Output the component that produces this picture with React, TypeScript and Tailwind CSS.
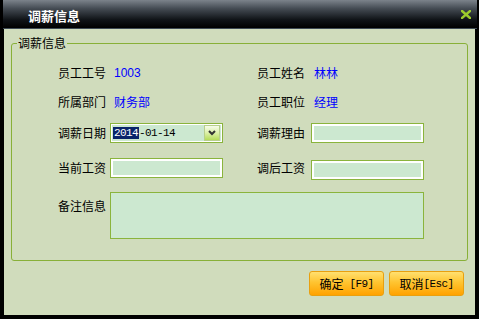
const cjk = "font-['Noto_Sans_CJK_SC',sans-serif]";
const mono = "font-['Liberation_Mono','Noto_Sans_CJK_SC',monospace] tracking-[-0.6px]";

function Label({ children, w }: { children: string; w: string }) {
    return <span className={`${w} text-[12px] leading-[14px] text-black ${cjk}`}>{children}</span>;
}

function Value({ children }: { children: string }) {
    return (
        <span className="ml-[4px] text-[12px] leading-[14px] text-[#0000ff] font-['Liberation_Sans','Noto_Sans_CJK_SC',sans-serif]">
            {children}
        </span>
    );
}

function TextBox({ extra = '' }: { extra?: string }) {
    return (
        <input
            className={`w-[113px] h-[20px] border border-[#8ab43c] bg-[#cce8d0] shadow-[inset_0_0_0_2px_#ffffff] outline-none ${extra}`}
        />
    );
}

export default function App() {
    return (
        <div className="w-[479px] h-[319px] bg-black flex flex-col overflow-hidden">
            {/* 标题栏 */}
            <div className="h-[29px] ml-[3px] mr-[2px] flex items-center justify-between border-b border-[#3e4a54] bg-[linear-gradient(to_bottom,#7c838b_0%,#454c54_30%,#101418_70%,#000000_100%)]">
                <span className={`ml-[25px] mt-[3px] text-[13px] font-bold text-white leading-[14px] ${cjk}`}>调薪信息</span>
                <svg className="mr-[6px] mt-[1px]" width="10" height="9" viewBox="0 0 10 9">
                    <path d="M1 1 L9 8 M9 1 L1 8" stroke="#9ccc2c" strokeWidth="2.4" strokeLinecap="square" />
                </svg>
            </div>

            {/* 内容 */}
            <div className="mx-[4px] h-[286px] bg-[#d0dcbc] flex flex-col">
                <div className="relative mt-[14px] mx-[7px] h-[218px] border border-[#88b038] rounded-[3px] pl-[46px] pt-[19px] flex flex-col">
                    <span className={`absolute left-[5px] top-[-8px] px-[1px] bg-[#d0dcbc] text-[12px] leading-[14px] text-black ${cjk}`}>
                        调薪信息
                    </span>

                    <div className="h-[20px] flex items-center">
                        <div className="w-[199px] flex items-center">
                            <Label w="w-[52px]">员工工号</Label>
                            <Value>1003</Value>
                        </div>
                        <div className="flex items-center">
                            <Label w="w-[54px]">员工姓名</Label>
                            <span className={`ml-[3px] text-[12px] leading-[14px] text-[#0000ff] ${cjk}`}>林林</span>
                        </div>
                    </div>

                    <div className="mt-[9px] h-[20px] flex items-center">
                        <div className="w-[199px] flex items-center">
                            <Label w="w-[52px]">所属部门</Label>
                            <span className={`ml-[4px] text-[12px] leading-[14px] text-[#0000ff] ${cjk}`}>财务部</span>
                        </div>
                        <div className="flex items-center">
                            <Label w="w-[54px]">员工职位</Label>
                            <span className={`ml-[3px] text-[12px] leading-[14px] text-[#0000ff] ${cjk}`}>经理</span>
                        </div>
                    </div>

                    <div className="mt-[11px] h-[20px] flex items-center">
                        <div className="w-[199px] flex items-center">
                            <Label w="w-[52px]">调薪日期</Label>
                            <div className="w-[113px] h-[20px] border border-[#8ab43c] bg-[#cce8d0] shadow-[inset_0_0_0_1px_#ffffff] flex items-center pl-[2px] pr-[2px]">
                                <span className={`text-[11px] leading-[13px] text-black ${mono}`}>
                                    <span className="bg-[#0a246a] text-white px-[1px]">2014</span>-01-14
                                </span>
                                <div className="ml-auto w-[16px] h-[16px] border border-[#b7cf8c] bg-[linear-gradient(to_bottom,#f6fbea_0%,#dcf0a8_50%,#b4dc58_100%)] flex items-center justify-center">
                                    <svg width="8" height="6" viewBox="0 0 8 6">
                                        <path d="M1 1 L4 4 L7 1" stroke="#333333" strokeWidth="2" fill="none" />
                                    </svg>
                                </div>
                            </div>
                        </div>
                        <div className="flex items-center">
                            <Label w="w-[54px]">调薪理由</Label>
                            <TextBox />
                        </div>
                    </div>

                    <div className="mt-[15px] h-[20px] flex items-center">
                        <div className="w-[199px] flex items-center">
                            <Label w="w-[52px]">当前工资</Label>
                            <TextBox />
                        </div>
                        <div className="flex items-center">
                            <Label w="w-[54px]">调后工资</Label>
                            <TextBox extra="mt-[4px]" />
                        </div>
                    </div>

                    <div className="mt-[14px] flex items-start">
                        <div className="w-[52px] pt-[1px]">
                            <Label w="w-[52px]">备注信息</Label>
                        </div>
                        <textarea className="w-[314px] h-[47px] border border-[#8ab43c] bg-[#cce8d0] outline-none resize-none" />
                    </div>
                </div>

                {/* 按钮 */}
                <div className="mt-[10px] pr-[11px] flex justify-end gap-[5px]">
                    <button className="w-[75px] h-[25px] rounded-[3px] border border-[#e8a010] bg-[linear-gradient(to_bottom,#ffe070_0%,#ffc430_45%,#ffa200_100%)] flex items-center justify-center">
                        <span className={`text-[12px] leading-[14px] text-black ${cjk}`}>确定</span>
                        <span className={`text-[11px] leading-[14px] text-black ${mono}`}>&nbsp;[F9]</span>
                    </button>
                    <button className="w-[75px] h-[25px] rounded-[3px] border border-[#e8a010] bg-[linear-gradient(to_bottom,#ffe070_0%,#ffc430_45%,#ffa200_100%)] flex items-center justify-center">
                        <span className={`text-[12px] leading-[14px] text-black ${cjk}`}>取消</span>
                        <span className={`text-[11px] leading-[14px] text-black ${mono}`}>[Esc]</span>
                    </button>
                </div>
            </div>
        </div>
    );
}
